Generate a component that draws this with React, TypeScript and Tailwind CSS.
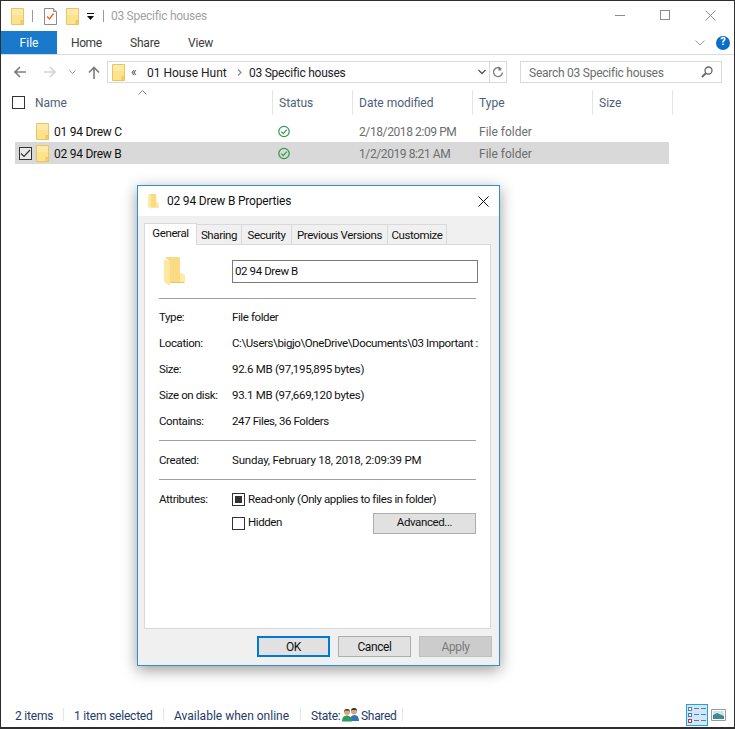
import React from "react";

const Folder = ({ className = "" }: { className?: string }) => (
  <svg viewBox="0 0 13 17" width="13" height="17" className={className}>
    <path d="M.5.5h12v16H.5z" fill="#ffe28c" stroke="#eac463" />
    <path d="M1 1h11v6H1z" fill="#ffe9a8" />
    <path d="M10 12.5h2.5v4H10z" fill="#f4d06a" stroke="#eac463" />
  </svg>
);

const ShellFolder = ({ w, h }: { w: number; h: number }) => (
  <svg viewBox="0 0 21 29" width={w} height={h} className="shrink-0">
    <path d="M1 0h14.5l.5 2v14l5 2v7H5V4z" fill="#fadb84" />
    <path d="M16 16l5 2v7h-5z" fill="#ffeaa8" />
    <path d="M0 2l6 3v24l-6-4z" fill="#ffe8a2" />
    <path d="M6 25h15l-1 1H6z" fill="#ecc660" />
  </svg>
);

const Check = () => (
  <svg width="13" height="13" viewBox="0 0 13 13">
    <circle cx="6" cy="6.5" r="5.2" fill="none" stroke="#2e9b4f" strokeWidth="1.2" />
    <path d="M3.3 6.6 5.3 8.6 8.8 4.7" fill="none" stroke="#2e9b4f" strokeWidth="1.2" />
  </svg>
);

const NavArrow = ({ color, flip = false }: { color: string; flip?: boolean }) => (
  <svg width="12" height="12" viewBox="0 0 12 12" className={flip ? "rotate-180" : ""}>
    <path d="M12 6H1.5M6 1 1 6l5 5" fill="none" stroke={color} strokeWidth="1.6" />
  </svg>
);

const Sep = () => <div className="w-px self-stretch my-[5px] bg-[#e4e5e7]" />;

const headCols: [string, string][] = [
  ["Status", "w-[80px]"],
  ["Date modified", "w-[120px]"],
  ["Type", "w-[120px]"],
  ["Size", "w-[80px]"],
];

const Row = ({ name, date, selected }: { name: string; date: string; selected?: boolean }) => (
  <div className={"flex items-center h-[22px] w-[654px] text-[12px] " + (selected ? "bg-[#d9d9d9]" : "")}>
    <div className="w-[21px] pl-[4px] flex">
      {selected && (
        <div className="w-[13px] h-[13px] border border-[#333] bg-[#e9e9e9] flex items-center justify-center">
          <svg width="11" height="11" viewBox="0 0 11 11">
            <path d="M1 5.500 4 8.500 10 2" fill="none" stroke="#333" strokeWidth="1.2" />
          </svg>
        </div>
      )}
    </div>
    <Folder />
    <span className="ml-[5px] w-[224px] pt-px text-[#111] whitespace-nowrap tracking-[-0.25px]">{name}</span>
    <div className="w-[81px] flex"><Check /></div>
    <span className="w-[120px] pt-px text-[#6d6d6d] whitespace-nowrap tracking-[-0.4px]">{date}</span>
    <span className="pt-px text-[#6d6d6d] whitespace-nowrap">File folder</span>
  </div>
);

const Info = ({ label, value, track = "" }: { label: string; value: string; track?: string }) => (
  <div className="flex items-center h-[26px] pt-[2px] text-[#111]">
    <span className="w-[73px] shrink-0 whitespace-nowrap">{label}</span>
    <span className={"whitespace-nowrap " + track}>{value}</span>
  </div>
);

const Tab = ({ label, w, active }: { label: string; w: string; active?: boolean }) => (
  <div
    className={
      w +
      " border-[#d9d9d9] border-t border-r whitespace-nowrap flex items-center justify-center " +
      (active
        ? "h-[22px] pb-[2px] bg-white border-l relative top-px text-[#111] z-10"
        : "h-[20px] pt-[2px] bg-[#f0f0f0] text-[#111]")
    }
  >
    {label}
  </div>
);

const Btn = ({ label, cls }: { label: string; cls: string }) => (
  <div className={"h-[21px] w-[73px] flex items-center justify-center " + cls}>{label}</div>
);

export default function App() {
  return (
    <div
      className="relative w-[735px] h-[729px] overflow-hidden bg-white flex flex-col border-x border-t border-b-2 border-[#2e2e2e] text-[#111]"
      style={{ fontFamily: "Roboto, sans-serif" }}
    >
      {/* Title bar */}
      <div className="h-[30px] flex items-center shrink-0 pl-[10px] pr-[18px]">
        <Folder />
        <div className="w-px h-[12px] bg-[#9a9a9a] ml-[8px]" />
        <svg width="13" height="17" viewBox="0 0 13 17" className="ml-[11px]">
          <path d="M.5.5h9l3 3v13H.5z" fill="#fff" stroke="#8a8a8a" />
          <path d="M9.500.5v3h3" fill="#e8e8e8" stroke="#8a8a8a" />
          <path d="M3 8.500 5.500 11 9.500 5.500" fill="none" stroke="#f0632b" strokeWidth="1.4" />
        </svg>
        <Folder className="ml-[9px]" />
        <svg width="8" height="8" viewBox="0 0 8 8" className="ml-[8px] mt-[2px]">
          <path d="M0 0h7v1H0zM0 3h7L3.500 7z" fill="#111" />
        </svg>
        <div className="w-px h-[12px] bg-[#9a9a9a] ml-[8px]" />
        <span className="ml-[7px] text-[12px] text-[#a3a3a3] whitespace-nowrap tracking-[-0.28px]">03 Specific houses</span>
        <div className="ml-auto flex items-center gap-[35px] pb-[2px]">
          <div className="w-[10px] h-px bg-[#8c8c8c]" />
          <div className="w-[10px] h-[10px] border border-[#8c8c8c]" />
          <svg width="11" height="11" viewBox="0 0 11 11">
            <path d="M.5.5l10 10M10.500.5l-10 10" stroke="#8c8c8c" fill="none" />
          </svg>
        </div>
      </div>

      {/* Ribbon tabs */}
      <div className="h-[24px] shrink-0 flex items-stretch border-b border-[#dadbdc] text-[12px] text-[#3b3b3b] pr-[3px]">
        <div className="w-[56px] bg-[#1979ca] text-white flex items-center justify-center">File</div>
        <span className="ml-[14px] self-center w-[34px] tracking-[-0.4px]">Home</span>
        <span className="ml-[25px] self-center w-[32px] tracking-[-0.2px]">Share</span>
        <span className="ml-[26px] self-center tracking-[-0.2px]">View</span>
        <svg width="10" height="6" viewBox="0 0 10 6" className="ml-auto self-center mr-[11px]">
          <path d="M.5.5 5 5 9.500.5" fill="none" stroke="#9a9a9a" />
        </svg>
        <div className="w-[14px] h-[14px] rounded-full bg-[#0a6ec8] text-white text-[11px] font-bold self-center flex items-center justify-center mr-px">?</div>
      </div>

      {/* Nav */}
      <div className="h-[35px] shrink-0 flex items-center pl-[13px] pr-[12px] pb-px text-[12px]">
        <NavArrow color="#7d7d7d" />
        <div className="ml-[18px]"><NavArrow color="#d4d4d4" flip /></div>
        <svg width="7" height="5" viewBox="0 0 7 5" className="ml-[13px]">
          <path d="M.5.5 3.500 3.500 6.500.5" fill="none" stroke="#9a9a9a" />
        </svg>
        <svg width="12" height="13" viewBox="0 0 12 13" className="ml-[12px]">
          <path d="M6 13V1.500M1 6.500l5-5 5 5" fill="none" stroke="#7d7d7d" strokeWidth="1.6" />
        </svg>
        <div className="ml-[7px] w-[400px] h-[22px] border border-[#d9d9d9] flex items-center pl-[4px] text-[#222]">
          <Folder />
          <span className="ml-[6px] text-[#444] w-[16px]">«</span>
          <span className="whitespace-nowrap w-[90px] pt-px">01 House Hunt</span>
          <svg width="5" height="7" viewBox="0 0 5 7">
            <path d="M1 .5 4 3.500 1 6.500" fill="none" stroke="#888" strokeWidth="1.2" />
          </svg>
          <span className="ml-[7px] pt-px whitespace-nowrap tracking-[-0.25px]">03 Specific houses</span>
          <svg width="8" height="6" viewBox="0 0 8 6" className="ml-auto mr-[3px]">
            <path d="M.5 1 4 4.500 7.500 1" fill="none" stroke="#555" strokeWidth="1.3" />
          </svg>
          <div className="w-px self-stretch bg-[#d9d9d9]" />
          <svg width="12" height="12" viewBox="0 0 12 12" className="mx-[2px]">
            <path d="M9.500 3.200A4.500 4.500 0 1 0 10.500 6.500" fill="none" stroke="#777" strokeWidth="1.3" />
            <path d="M6.500 0v4.500h3z" fill="#777" />
          </svg>
        </div>
        <div className="ml-auto w-[202px] h-[22px] border border-[#d9d9d9] flex items-center pl-[8px] pr-[8px] text-[#6d6d6d]">
          <span className="whitespace-nowrap pt-px tracking-[-0.25px]">Search 03 Specific houses</span>
          <svg width="12" height="12" viewBox="0 0 12 12" className="ml-auto">
            <circle cx="7.500" cy="4.500" r="3.500" fill="none" stroke="#666" strokeWidth="1.3" />
            <path d="M5 7 1 11" stroke="#666" strokeWidth="1.8" />
          </svg>
        </div>
      </div>

      {/* Column header */}
      <div className="relative h-[25px] shrink-0 flex items-stretch text-[12px] text-[#4c607a]">
        <svg width="9" height="5" viewBox="0 0 9 5" className="absolute left-[137px] top-0">
          <path d="M.5 4.500 4.500.5l4 4" fill="none" stroke="#888" />
        </svg>
        <div className="w-[271px] flex items-center pl-[11px]">
          <div className="w-[13px] h-[13px] border border-[#333]" />
          <span className="ml-[10px] pt-px">Name</span>
        </div>
        {headCols.map(([t, w]) => (
          <div key={t} className={w + " flex items-center border-l border-[#e4e5e7] pl-[6px] pt-px whitespace-nowrap"}>{t}</div>
        ))}
        <div className="border-l border-[#e4e5e7]" />
      </div>

      {/* Rows */}
      <div className="pl-[14px] pt-[5px] flex flex-col shrink-0">
        <Row name="01 94 Drew C" date="2/18/2018 2:09 PM" />
        <Row name="02 94 Drew B" date="1/2/2019 8:21 AM" selected />
      </div>

      {/* Status bar */}
      <div className="mt-auto h-[23px] shrink-0 flex items-center text-[12px] text-[#1e3a66] pl-[14px] mb-px">
        <span className="whitespace-nowrap w-[48px] pt-[2px] tracking-[-0.2px]">2 items</span>
        <Sep />
        <span className="whitespace-nowrap ml-[10px] w-[89px] pt-[2px] tracking-[-0.2px]">1 item selected</span>
        <Sep />
        <span className="whitespace-nowrap ml-[10px] w-[126px] pt-[2px]">Available when online</span>
        <Sep />
        <span className="whitespace-nowrap ml-[10px] w-[31px] pt-[2px] tracking-[-0.2px]">State:</span>
        <svg width="17" height="15" viewBox="0 0 17 15" className="shrink-0">
          <path d="M8 14c0-4 1.500-6 4.500-6S17 10 17 14z" fill="#2f76b5" />
          <circle cx="12" cy="4.500" r="3" fill="#d6a67f" />
          <path d="M9 4a3 3 0 0 1 6 0l-1-1h-4z" fill="#2c2f36" />
          <path d="M0 14.500c0-4 1.500-6 4.500-6S10 10.500 10 14.500z" fill="#2f9a5c" />
          <circle cx="5" cy="5" r="3" fill="#d6a67f" />
          <path d="M2 5a3 3 0 0 1 6 0l-1-1.500H3z" fill="#3a2a20" />
        </svg>
        <span className="whitespace-nowrap ml-[2px] w-[41px] pt-[2px] tracking-[-0.3px]">Shared</span>
        <Sep />
        <div className="ml-auto flex items-center mr-[8px]">
          <div className="w-[22px] h-[22px] bg-[#cce8ff] border border-[#26a0da] flex flex-col items-center justify-center gap-[2px]">
            {["#777", "#3d7ac6", "#c8383a"].map((c) => (
              <div key={c} className="flex items-center gap-[2px]">
                <div className="w-[4px] h-[4px] bg-white border" style={{ borderColor: c }} />
                <div className="w-[5px] h-px bg-[#777]" />
                <div className="w-[5px] h-px bg-[#777]" />
              </div>
            ))}
          </div>
          <svg width="15" height="12" viewBox="0 0 15 12" className="ml-[3px]">
            <path d="M.5.5h14v11H.5z" fill="#fff" stroke="#9a9a9a" />
            <path d="M2 2h11v8H2z" fill="#cde6ee" />
            <path d="M2 6 6 4l7 3v3H2z" fill="#3f8a8a" />
          </svg>
        </div>
      </div>

      {/* Properties dialog: a window lying over the explorer */}
      <div className="absolute left-[136px] top-[184px] w-[363px] h-[481px] bg-[#f0f0f0] border border-[#2c8fd8] shadow-[0_4px_14px_rgba(0,0,0,0.4)] flex flex-col text-[11.5px] tracking-[-0.4px]">
        <div className="h-[30px] shrink-0 bg-white flex items-center pl-[10px] pr-[10px] text-[12px] tracking-[-0.2px] text-[#111]">
          <ShellFolder w={11} h={15} />
          <span className="ml-[8px] whitespace-nowrap">02 94 Drew B Properties</span>
          <svg width="11" height="11" viewBox="0 0 11 11" className="ml-auto">
            <path d="M.5.5l10 10M10.500.5l-10 10" stroke="#111" fill="none" />
          </svg>
        </div>
        <div className="h-[28px] shrink-0 flex items-end pl-[6px]">
          <Tab label="General" w="w-[53px]" active />
          <Tab label="Sharing" w="w-[45px]" />
          <Tab label="Security" w="w-[50px]" />
          <Tab label="Previous Versions" w="w-[96px]" />
          <Tab label="Customize" w="w-[59px]" />
        </div>
        <div className="mx-[6px] w-[347px] h-[385px] bg-white border border-[#d9d9d9] flex flex-col px-[14px]">
          <div className="h-[53px] shrink-0 flex items-center pl-[5px]">
            <ShellFolder w={21} h={29} />
            <div className="ml-[47px] w-[246px] shrink-0 h-[23px] border border-[#7a7a7a] flex items-center pl-[2px] text-[#111]">02 94 Drew B</div>
          </div>
          <div className="h-px w-[317px] bg-[#a0a0a0] shrink-0" />
          <div className="h-[5px] shrink-0" />
          <Info label="Type:" value="File folder" />
          <Info label="Location:" value="C:\Users\bigjo\OneDrive\Documents\03 Important :" />
          <Info label="Size:" value="92.6 MB (97,195,895 bytes)" track="tracking-[-0.3px]" />
          <Info label="Size on disk:" value="93.1 MB (97,669,120 bytes)" track="tracking-[-0.3px]" />
          <Info label="Contains:" value="247 Files, 36 Folders" />
          <div className="h-[6px] shrink-0" />
          <div className="h-px w-[317px] bg-[#a0a0a0] shrink-0" />
          <div className="h-[6px] shrink-0" />
          <Info label="Created:" value="Sunday, February 18, 2018, 2:09:39 PM" track="tracking-[-0.2px]" />
          <div className="h-[6px] shrink-0" />
          <div className="h-px w-[317px] bg-[#a0a0a0] shrink-0" />
          <div className="h-[8px] shrink-0" />
          <div className="flex h-[22px] items-center">
            <span className="w-[73px] pt-[2px]">Attributes:</span>
            <div className="w-[13px] h-[13px] border border-[#333] flex items-center justify-center">
              <div className="w-[7px] h-[7px] bg-[#333]" />
            </div>
            <span className="ml-[3px] pt-[2px] whitespace-nowrap">Read-only (Only applies to files in folder)</span>
          </div>
          <div className="flex h-[26px] items-center pl-[73px]">
            <div className="w-[13px] h-[13px] border border-[#333] bg-white" />
            <span className="ml-[3px]">Hidden</span>
            <div className="ml-auto w-[103px] h-[21px] bg-[#e1e1e1] border border-[#adadad] flex items-center justify-center">Advanced...</div>
          </div>
        </div>
        <div className="flex justify-end gap-[8px] pr-[7px] pt-[7px] text-[12px]">
          <Btn label="OK" cls="bg-[#e1e1e1] border-2 border-[#0078d7]" />
          <Btn label="Cancel" cls="bg-[#e1e1e1] border border-[#adadad]" />
          <Btn label="Apply" cls="bg-[#cccccc] border border-[#bfbfbf] text-[#7a7a7a]" />
        </div>
      </div>
    </div>
  );
}
